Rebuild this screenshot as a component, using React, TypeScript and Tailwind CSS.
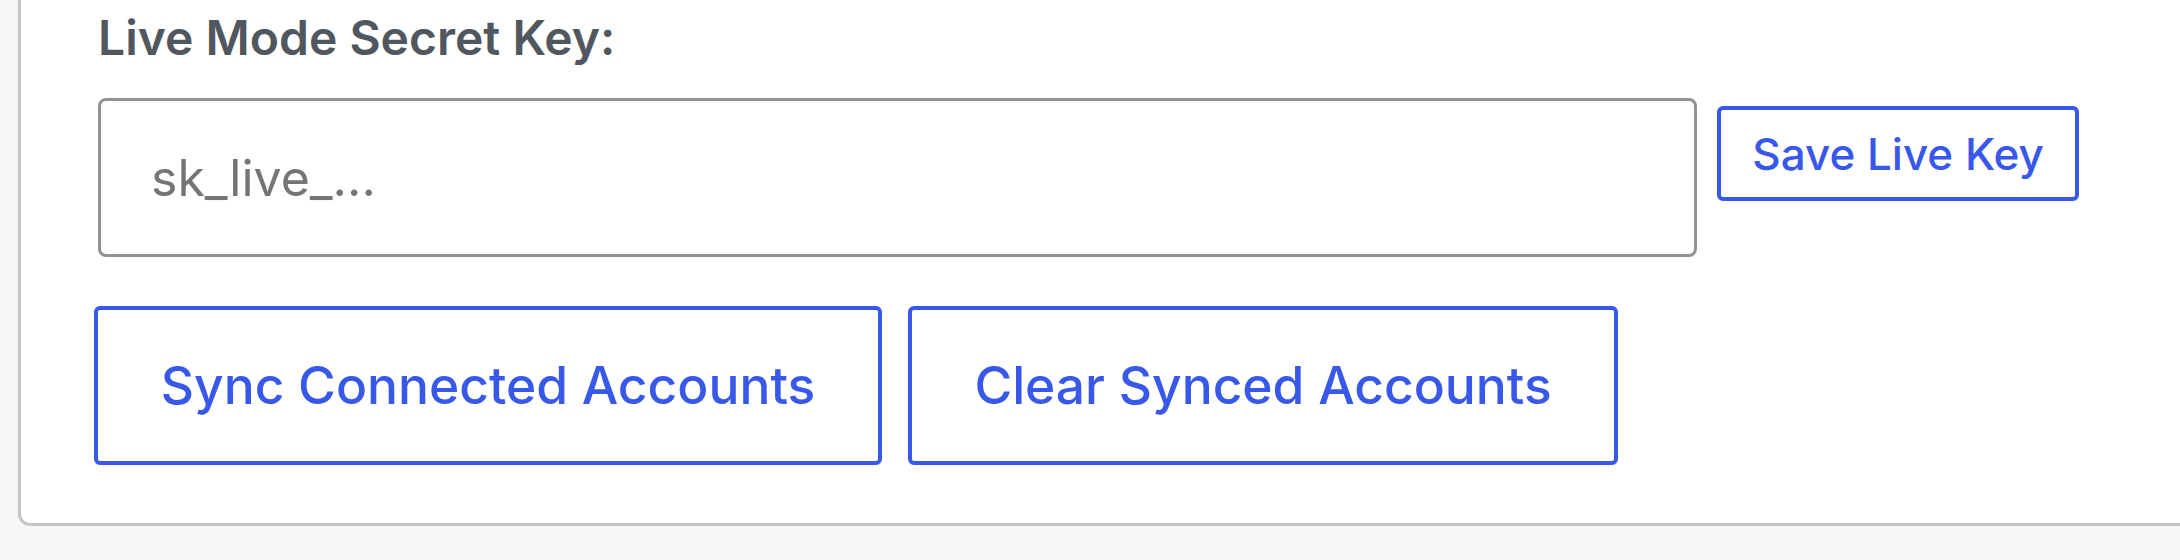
import React from 'react';

export default function App() {
  return (
    <div className="min-h-[560px] w-full bg-[#f5f6f6] pl-[18px] font-['Inter','Liberation_Sans',sans-serif] overflow-hidden">
      <div className="bg-white border-l-[3px] border-b-[3px] border-[#c3c4c7] rounded-bl-[12px] h-[526px] pl-[77px] pt-[14px]">
        <label className="block text-[48px] leading-none font-semibold text-[#50575e]">
          Live Mode Secret Key:
        </label>

        <div className="flex items-start gap-[20px] mt-[36px]">
          <input
            type="text"
            placeholder="sk_live_..."
            className="w-[1599px] h-[159px] border-[3px] border-[#929292] rounded-[8px] px-[50px] text-[50px] text-[#2c3338] placeholder:text-[#757575] outline-none bg-white"
          />
          <button className="mt-[8px] w-[362px] h-[95px] border-[4px] border-[#3858e9] rounded-[6px] text-[44px] font-medium text-[#3858e9] bg-white">
            Save Live Key
          </button>
        </div>

        <div className="flex gap-[26px] mt-[49px] -ml-[4px]">
          <button className="w-[788px] h-[159px] border-[4px] border-[#3858e9] rounded-[6px] text-[51.5px] font-medium text-[#3858e9] bg-white">
            Sync Connected Accounts
          </button>
          <button className="w-[710px] h-[159px] border-[4px] border-[#3858e9] rounded-[6px] text-[51.5px] font-medium text-[#3858e9] bg-white">
            Clear Synced Accounts
          </button>
        </div>
      </div>
    </div>
  );
}
